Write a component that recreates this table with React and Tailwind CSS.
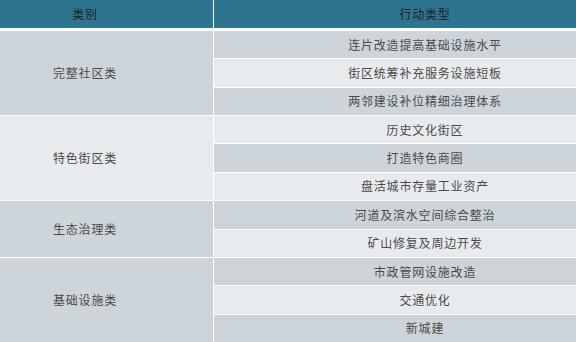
const groups = [
  {
    name: "完整社区类",
    bg: "bg-[#cdd5da]",
    items: ["连片改造提高基础设施水平", "街区统筹补充服务设施短板", "两邻建设补位精细治理体系"],
  },
  {
    name: "特色街区类",
    bg: "bg-[#e8ebed]",
    items: ["历史文化街区", "打造特色商圈", "盘活城市存量工业资产"],
  },
  {
    name: "生态治理类",
    bg: "bg-[#cdd5da]",
    items: ["河道及滨水空间综合整治", "矿山修复及周边开发"],
  },
  {
    name: "基础设施类",
    bg: "bg-[#cdd5da]",
    items: ["市政管网设施改造", "交通优化", "新城建"],
  },
];

const font = { fontFamily: '"Noto Sans CJK SC", "Noto Sans", sans-serif' };

export default function App() {
  let idx = 0;
  return (
    <div className="w-[576px] h-[342px] bg-white overflow-hidden text-[12px] tracking-[0.8px]" style={font}>
      <div className="flex gap-px h-[28px] mb-[3px] text-[#202020]">
        <div className="w-[213px] bg-[#2e748e] flex items-center justify-center pr-[43px]">类别</div>
        <div className="flex-1 bg-[#2e748e] flex items-center justify-center pl-[60px]">行动类型</div>
      </div>
      <div className="flex flex-col gap-px text-[#4a4a4a]">
        {groups.map((g) => (
          <div key={g.name} className="flex gap-px">
            <div className={`w-[213px] ${g.bg} flex items-center justify-center pr-[43px]`}>{g.name}</div>
            <div className="flex-1 flex flex-col gap-px">
              {g.items.map((it) => {
                const alt = idx++ % 2 === 0;
                return (
                  <div
                    key={it}
                    className={`h-[27.36px] flex items-center justify-center pl-[60px] ${alt ? "bg-[#cdd5da]" : "bg-[#e8ebed]"}`}
                  >
                    {it}
                  </div>
                );
              })}
            </div>
          </div>
        ))}
      </div>
    </div>
  );
}
